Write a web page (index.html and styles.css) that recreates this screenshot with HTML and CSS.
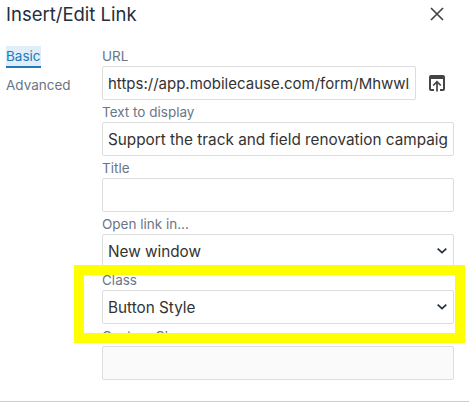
FILE: index.html
```html
<!DOCTYPE html>
<html>
  <head>
    <meta charset="UTF-8" />
    <title>Insert/Edit Link</title>
    <link rel="stylesheet" href="styles.css">
  </head>
  <body>
    <div class="dialog">
      <div class="dialog_header">
        <div class="dialog_title">Insert/Edit Link</div>
        <svg class="close_icon" width="14" height="14" viewBox="0 0 14 14">
          <path d="M1 1 L13 13 M13 1 L1 13" stroke="#444" stroke-width="1.7" fill="none" />
        </svg>
      </div>

      <div class="dialog_body">
        <div class="tabs">
          <div class="tab tab_active">Basic</div>
          <div class="tab">Advanced</div>
        </div>

        <div class="form">
          <div class="field">
            <label class="field_label">URL</label>
            <div class="url_row">
              <input class="text_input url_input" type="text" value="https://app.mobilecause.com/form/MhwwlA" />
              <svg class="browse_icon" width="18" height="18" viewBox="0 0 18 18">
                <path d="M1 3 Q1 1 3 1 L15 1 Q17 1 17 3 L17 15 Q17 17 15 17 L12 17 L12 15 L15 15 L15 5 L3 5 L3 15 L6 15 L6 17 L3 17 Q1 17 1 15 Z" fill="#444" />
                <path d="M9 17.5 L9 8 M5.2 11.5 L9 7.7 L12.8 11.5" stroke="#444" stroke-width="1.7" fill="none" />
              </svg>
            </div>
          </div>

          <div class="field">
            <label class="field_label">Text to display</label>
            <input class="text_input" type="text" value="Support the track and field renovation campaign" />
          </div>

          <div class="field">
            <label class="field_label">Title</label>
            <input class="text_input" type="text" />
          </div>

          <div class="field">
            <label class="field_label">Open link in...</label>
            <div class="select_wrap">
              <select class="select_input">
                <option>New window</option>
              </select>
              <svg class="chevron" width="10" height="6" viewBox="0 0 10 6">
                <path d="M0.7 0.7 L5 4.7 L9.3 0.7" stroke="#222f3e" stroke-width="1.7" fill="none" />
              </svg>
            </div>
          </div>

          <div class="field">
            <label class="field_label">Class</label>
            <div class="select_wrap">
              <select class="select_input">
                <option>Button Style</option>
              </select>
              <svg class="chevron" width="10" height="6" viewBox="0 0 10 6">
                <path d="M0.7 0.7 L5 4.7 L9.3 0.7" stroke="#222f3e" stroke-width="1.7" fill="none" />
              </svg>
            </div>
          </div>

          <div class="field">
            <label class="field_label">Custom Class</label>
            <input class="text_input text_input_disabled" type="text" disabled />
          </div>
        </div>
      </div>

      <div class="dialog_footer"></div>
    </div>

    <div class="highlight"></div>
  </body>
</html>
```

FILE: styles.css
```css
html,
body {
  margin: 0;
  padding: 0;
  background-color: #fff;
}
body {
  font-family: "Inter", "Liberation Sans", sans-serif;
  color: #222f3e;
  overflow: hidden;
}

/* Dialog header */
.dialog_header {
  height: 28px;
  display: flex;
  justify-content: space-between;
  align-items: center;
  padding: 0 25px 0 6px;
}
.dialog_title {
  font-size: 18.5px;
  line-height: 29px;
  padding-top: 1px;
}
.close_icon {
  display: block;
}

/* Tabs and form */
.dialog_body {
  display: flex;
  height: 374px;
  padding: 16px 15px 0 6px;
  box-sizing: border-box;
  border-bottom: 1px solid #ccc;
}
.tabs {
  width: 96px;
  flex-shrink: 0;
  padding-top: 2px;
}
.tab {
  width: fit-content;
  font-size: 13.5px;
  line-height: 20px;
  color: #6a7686;
  margin-bottom: 8px;
}
.tab_active {
  color: #207ab7;
  background-color: #dfeef8;
  border-bottom: 2px solid #207ab7;
  margin-bottom: 7px;
}
.form {
  flex: 1;
  min-width: 0;
}
.field_label {
  display: block;
  height: 22px;
  font-size: 13.5px;
  line-height: 25px;
  color: #6a7686;
}
.url_row {
  display: flex;
  align-items: center;
  gap: 12px;
}
.browse_icon {
  margin-right: 8px;
  flex-shrink: 0;
}
.text_input,
.select_input {
  display: block;
  width: 100%;
  height: 34px;
  min-width: 0;
  box-sizing: border-box;
  border: 1px solid #ddd;
  border-radius: 2px;
  padding: 0 5px;
  margin: 0;
  background-color: #fff;
  font-family: inherit;
  font-size: 15.3px;
  color: #333;
  outline: none;
}
.url_input {
  font-size: 15px;
}
.text_input_disabled {
  background-color: #fafafa;
}
.select_input {
  appearance: none;
  -webkit-appearance: none;
}
.select_wrap {
  position: relative;
}
.chevron {
  position: absolute;
  top: 14px;
  right: 7px;
}

/* Yellow annotation drawn over the screenshot */
.highlight {
  position: absolute;
  left: 74px;
  top: 265px;
  width: 391px;
  height: 78px;
  box-sizing: border-box;
  border: 10px solid #ffff00;
}
```
